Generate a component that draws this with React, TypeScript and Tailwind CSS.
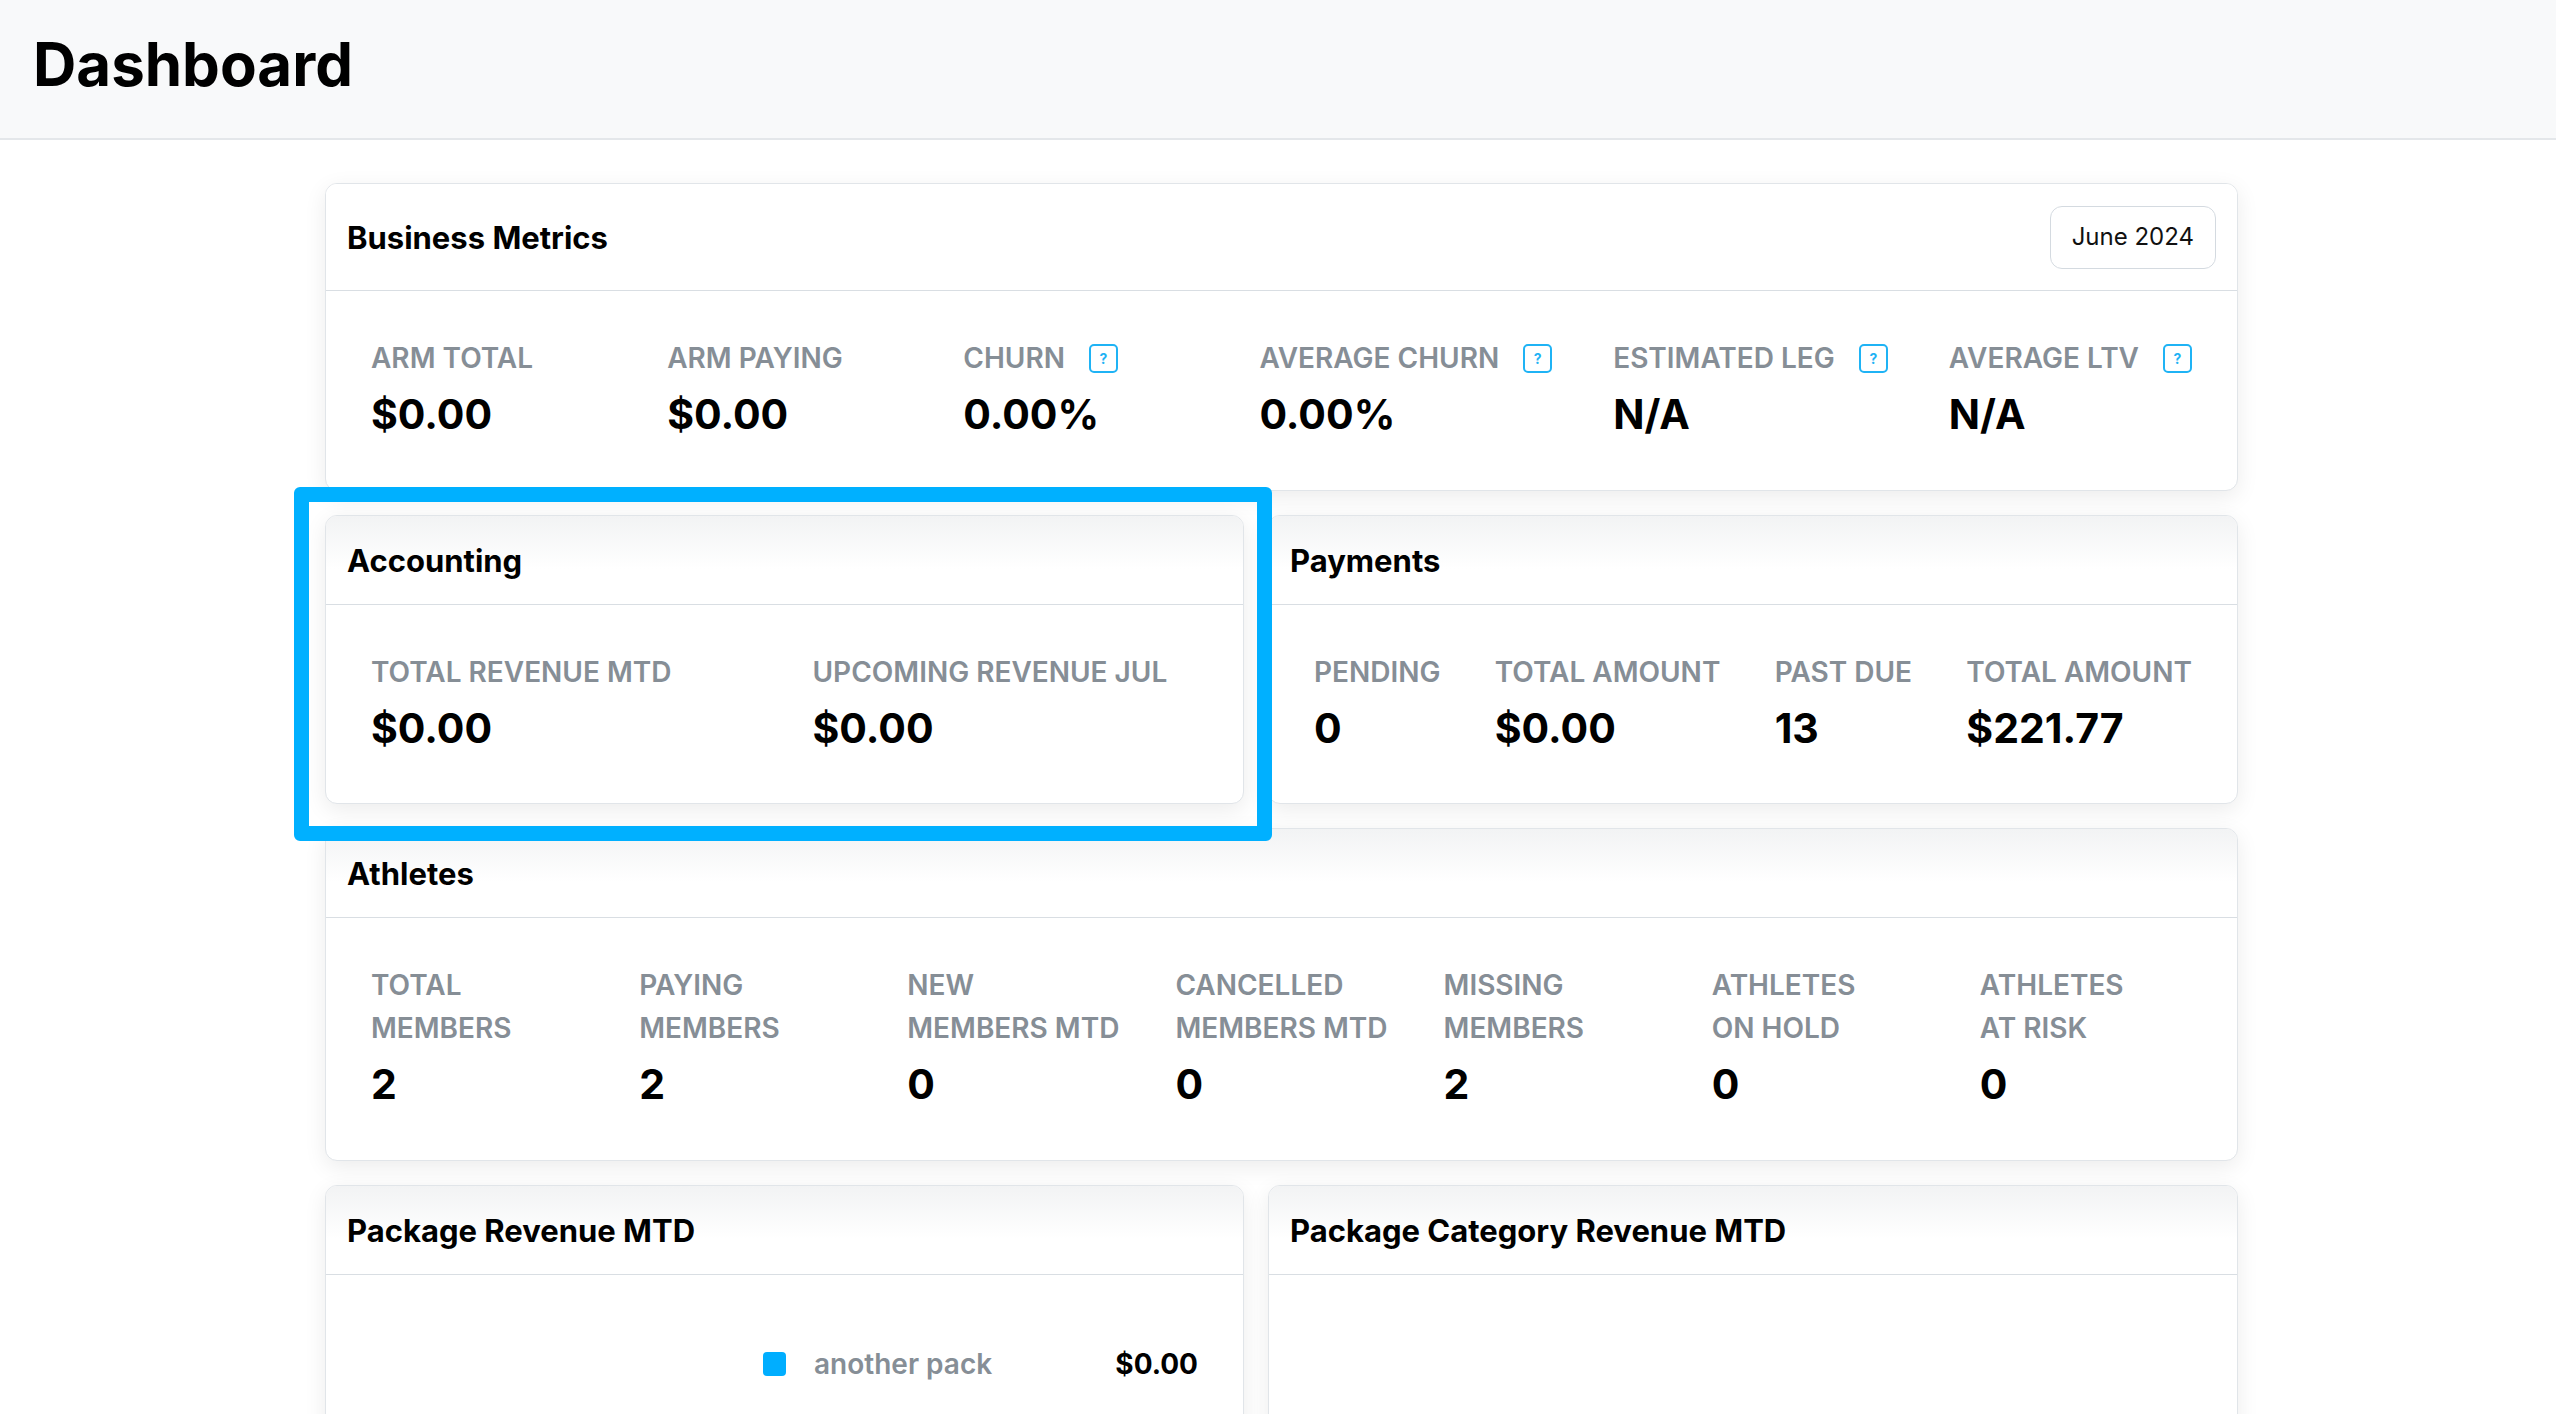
import React from "react";

type StatProps = {
  label: React.ReactNode;
  value: string;
  help?: boolean;
  grow?: boolean;
};

function Help() {
  return (
    <span className="flex h-[29px] w-[29px] shrink-0 items-center justify-center rounded-[5px] border-2 border-[#1fb3f5] text-[14px] font-bold leading-none text-[#1fb3f5]">
      ?
    </span>
  );
}

function Stat({ label, value, help, grow = true }: StatProps) {
  return (
    <div className={`whitespace-nowrap ${grow ? "flex-1" : ""}`}>
      <div className="flex items-center gap-[24px] text-[28px] font-semibold leading-[43px] text-[#868e96]">
        <div>{label}</div>
        {help && <Help />}
      </div>
      <div className="mt-[6px] text-[41px] font-bold leading-[56px] text-black">{value}</div>
    </div>
  );
}

function Card({
  title,
  action,
  shaded = true,
  className = "",
  children,
}: {
  title: string;
  action?: React.ReactNode;
  shaded?: boolean;
  className?: string;
  children: React.ReactNode;
}) {
  return (
    <div
      className={`overflow-hidden rounded-[12px] border border-[#e1e5e9] bg-white shadow-[0_6px_22px_rgba(0,0,0,0.08)] ${className}`}
    >
      <div
        className={`flex items-center justify-between border-b border-[#d9dee3] px-[21px] ${
          action ? "h-[107px]" : "h-[89px]"
        } ${shaded ? "bg-linear-to-b from-[#f2f3f4] to-white to-60%" : "bg-white"}`}
      >
        <h2 className="text-[31px] font-bold leading-[45px] text-black">{title}</h2>
        {action}
      </div>
      {children}
    </div>
  );
}

const athletes: { lines: [string, string]; value: string }[] = [
  { lines: ["TOTAL", "MEMBERS"], value: "2" },
  { lines: ["PAYING", "MEMBERS"], value: "2" },
  { lines: ["NEW", "MEMBERS MTD"], value: "0" },
  { lines: ["CANCELLED", "MEMBERS MTD"], value: "0" },
  { lines: ["MISSING", "MEMBERS"], value: "2" },
  { lines: ["ATHLETES", "ON HOLD"], value: "0" },
  { lines: ["ATHLETES", "AT RISK"], value: "0" },
];

export default function App() {
  return (
    <div className="min-h-screen bg-white font-['Inter',sans-serif] text-black">
      <header className="flex h-[140px] items-center border-b-2 border-[#e4e7ea] bg-[#f8f9fa] px-[33px] pb-[10px]">
        <h1 className="text-[60px] font-bold leading-none">Dashboard</h1>
      </header>

      <main className="ml-[325px] flex w-[1913px] flex-col gap-[24px] pt-[43px]">
        <Card
          title="Business Metrics"
          shaded={false}
          action={
            <button
              type="button"
              className="h-[63px] rounded-[12px] border border-[#d4dae0] bg-white px-[21px] text-[24px] text-[#111]"
            >
              June 2024
            </button>
          }
        >
          <div className="flex gap-[61px] px-[45px] pb-[48px] pt-[46px]">
            <Stat label="ARM TOTAL" value="$0.00" />
            <Stat label="ARM PAYING" value="$0.00" />
            <Stat label="CHURN" value="0.00%" help />
            <Stat label="AVERAGE CHURN" value="0.00%" help />
            <Stat label="ESTIMATED LEG" value="N/A" help />
            <Stat label="AVERAGE LTV" value="N/A" help />
          </div>
        </Card>

        <div className="flex gap-[24px]">
          <div className="relative w-[919px] shrink-0">
            <Card title="Accounting">
              <div className="grid grid-cols-2 gap-x-[56px] px-[45px] pb-[47px] pt-[46px]">
                <Stat label="TOTAL REVENUE MTD" value="$0.00" />
                <Stat label="UPCOMING REVENUE JUL" value="$0.00" />
              </div>
            </Card>
            <div className="pointer-events-none absolute -bottom-[37px] -left-[31px] -right-[28px] -top-[28px] z-10 rounded-[6px] border-[15px] border-[#00b0ff]" />
          </div>
          <Card title="Payments" className="flex-1">
            <div className="flex justify-between px-[45px] pb-[47px] pt-[46px]">
              <Stat label="PENDING" value="0" grow={false} />
              <Stat label="TOTAL AMOUNT" value="$0.00" grow={false} />
              <Stat label="PAST DUE" value="13" grow={false} />
              <Stat label="TOTAL AMOUNT" value="$221.77" grow={false} />
            </div>
          </Card>
        </div>

        <Card title="Athletes">
          <div className="flex gap-[56px] px-[45px] pb-[48px] pt-[46px]">
            {athletes.map((a, i) => (
              <Stat
                key={i}
                label={
                  <>
                    <span className="block">{a.lines[0]}</span>
                    <span className="block">{a.lines[1]}</span>
                  </>
                }
                value={a.value}
              />
            ))}
          </div>
        </Card>

        <div className="flex gap-[24px] pb-[40px]">
          <Card title="Package Revenue MTD" className="w-[919px] shrink-0">
            <div className="flex min-h-[360px] justify-end px-[45px] pt-[69px]">
              <div className="flex h-[40px] w-[435px] items-center">
                <span className="h-[24px] w-[23px] rounded-[4px] bg-[#00aeff]" />
                <span className="ml-[28px] text-[28px] font-semibold text-[#868e96]">another pack</span>
                <span className="ml-auto text-[28px] font-bold text-black">$0.00</span>
              </div>
            </div>
          </Card>
          <Card title="Package Category Revenue MTD" className="flex-1">
            <div className="min-h-[360px]" />
          </Card>
        </div>
      </main>
    </div>
  );
}
